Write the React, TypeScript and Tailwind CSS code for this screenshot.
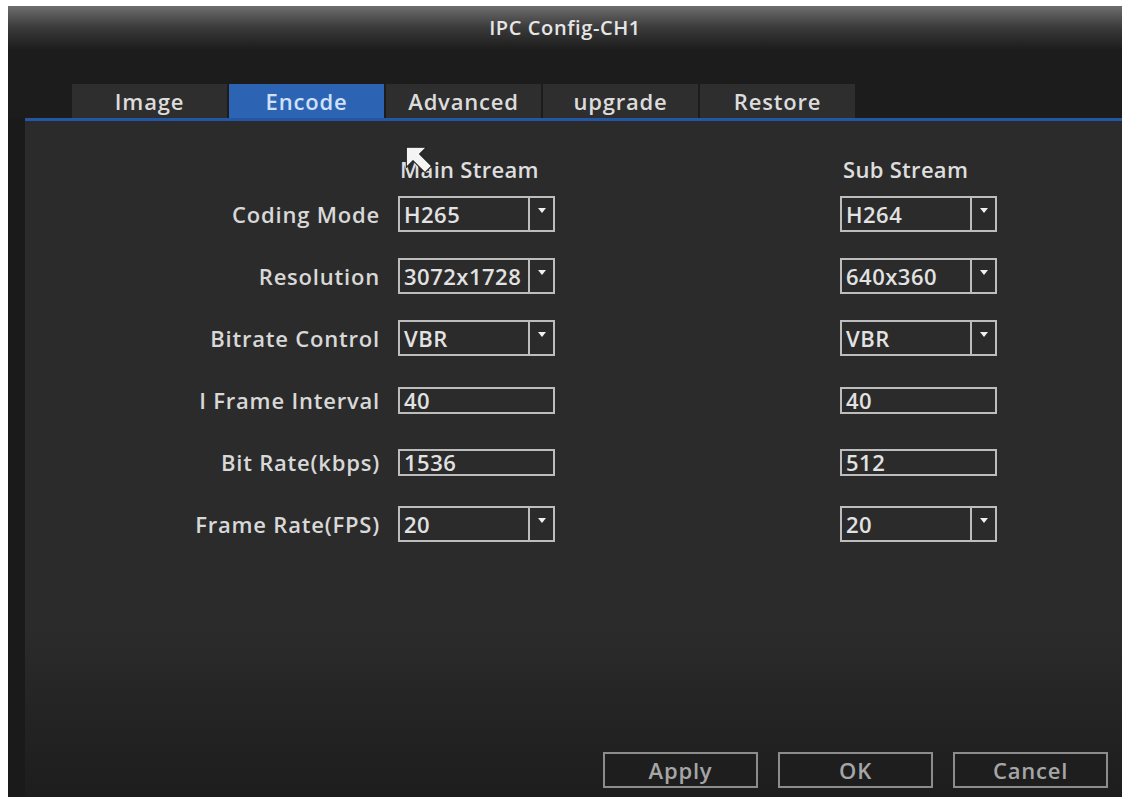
const font = { fontFamily: '"Open Sans", "Noto Sans", sans-serif' }

const tabs = ['Image', 'Encode', 'Advanced', 'upgrade', 'Restore']

type Field = { label: string; main: string; sub: string; select: boolean }

const fields: Field[] = [
    { label: 'Coding Mode', main: 'H265', sub: 'H264', select: true },
    { label: 'Resolution', main: '3072x1728', sub: '640x360', select: true },
    { label: 'Bitrate Control', main: 'VBR', sub: 'VBR', select: true },
    { label: 'I Frame Interval', main: '40', sub: '40', select: false },
    { label: 'Bit Rate(kbps)', main: '1536', sub: '512', select: false },
    { label: 'Frame Rate(FPS)', main: '20', sub: '20', select: true }
]

function Select({ value }: { value: string }) {
    return (
        <div className="flex h-[36px] w-[157px] border-2 border-[#bdbdbd]">
            <div className="flex flex-1 items-center border-r-2 border-[#bdbdbd] pl-[4px] text-[22px] font-semibold tracking-[0.5px] text-[#e2e2e2]">
                {value}
            </div>
            <div className="flex w-[23px] items-start justify-center pt-[10px]">
                <svg width="8" height="5" viewBox="0 0 8 5">
                    <path d="M0 0H8L4 5Z" fill="#f0f0f0" />
                </svg>
            </div>
        </div>
    )
}

function Input({ value }: { value: string }) {
    return (
        <div className="flex h-[27px] w-[157px] items-center border-2 border-[#bdbdbd] pl-[4px] text-[22px] font-semibold tracking-[0.5px] text-[#e2e2e2]">
            {value}
        </div>
    )
}

function Control({ field, value }: { field: Field; value: string }) {
    return field.select ? <Select value={value} /> : <Input value={value} />
}

export default function App() {
    return (
        <div className="h-[801px] w-[1132px] bg-white pl-[8px] pt-[6px]" style={font}>
            <div className="flex h-[791px] w-[1114px] flex-col bg-[#1c1c1c]">
                {/* Title bar */}
                <div className="flex h-[44px] items-center justify-center bg-gradient-to-b from-[#6e6e6e] via-[#3a3a3a] to-[#1c1c1c] text-[20px] font-semibold tracking-[0.6px] text-[#e6e6e6]">
                    IPC Config-CH1
                </div>

                {/* Tabs */}
                <div className="flex h-[68px] items-end pl-[64px]">
                    {tabs.map((t) => (
                        <div
                            key={t}
                            className={`mr-[2px] flex h-[34px] w-[155px] items-center justify-center text-[22px] font-semibold tracking-[0.8px] ${
                                t === 'Encode'
                                    ? 'bg-[#2c63b3] text-[#cfe0fa]'
                                    : 'bg-[#2e2e2e] text-[#dcdcdc]'
                            }`}
                        >
                            {t}
                        </div>
                    ))}
                </div>

                <div className="flex flex-1">
                    <div className="w-[17px] bg-[#1a1a1a]" />
                    <div className="flex flex-1 flex-col">
                        <div className="h-[3px] bg-[#2456a8]" />

                        {/* Content */}
                        <div className="relative flex flex-1 flex-col bg-gradient-to-b from-[#2b2b2b] via-[#2b2b2b] via-75% to-[#1d1d1d] pt-[34px]">
                            <div className="flex h-[28px] items-center text-[22px] font-semibold tracking-[0.3px] text-[#dedede]">
                                <div className="w-[373px]" />
                                <div className="w-[442px] pl-[2px]">Main Stream</div>
                                <div className="pl-[3px]">Sub Stream</div>
                            </div>

                            {fields.map((f) => (
                                <div key={f.label} className="flex h-[62px] items-center">
                                    <div className="w-[356px] pr-[1px] text-right text-[22px] font-semibold tracking-[0.8px] text-[#d8d8d8]">
                                        {f.label}
                                    </div>
                                    <div className="ml-[17px] w-[442px]">
                                        <Control field={f} value={f.main} />
                                    </div>
                                    <Control field={f} value={f.sub} />
                                </div>
                            ))}

                            {/* Footer buttons */}
                            <div className="mt-auto flex justify-end gap-[20px] pb-[9px] pr-[14px]">
                                {['Apply', 'OK', 'Cancel'].map((b) => (
                                    <div
                                        key={b}
                                        className="flex h-[36px] w-[155px] items-center justify-center border-2 border-[#8c8c8c] bg-[#1e1e1e] text-[22px] font-semibold tracking-[0.8px] text-[#a6a6a6]"
                                    >
                                        {b}
                                    </div>
                                ))}
                            </div>

                            {/* Mouse cursor */}
                            <svg
                                className="absolute left-[380px] top-[25px]"
                                width="32"
                                height="32"
                                viewBox="0 0 24 24"
                            >
                                <path
                                    d="M1 1L16 1L11 6L20 15L15 20L6 11L1 16Z"
                                    fill="#f4f4f4"
                                    stroke="#222"
                                    strokeWidth="0.8"
                                    strokeLinejoin="round"
                                />
                            </svg>
                        </div>
                    </div>
                </div>
            </div>
        </div>
    )
}
